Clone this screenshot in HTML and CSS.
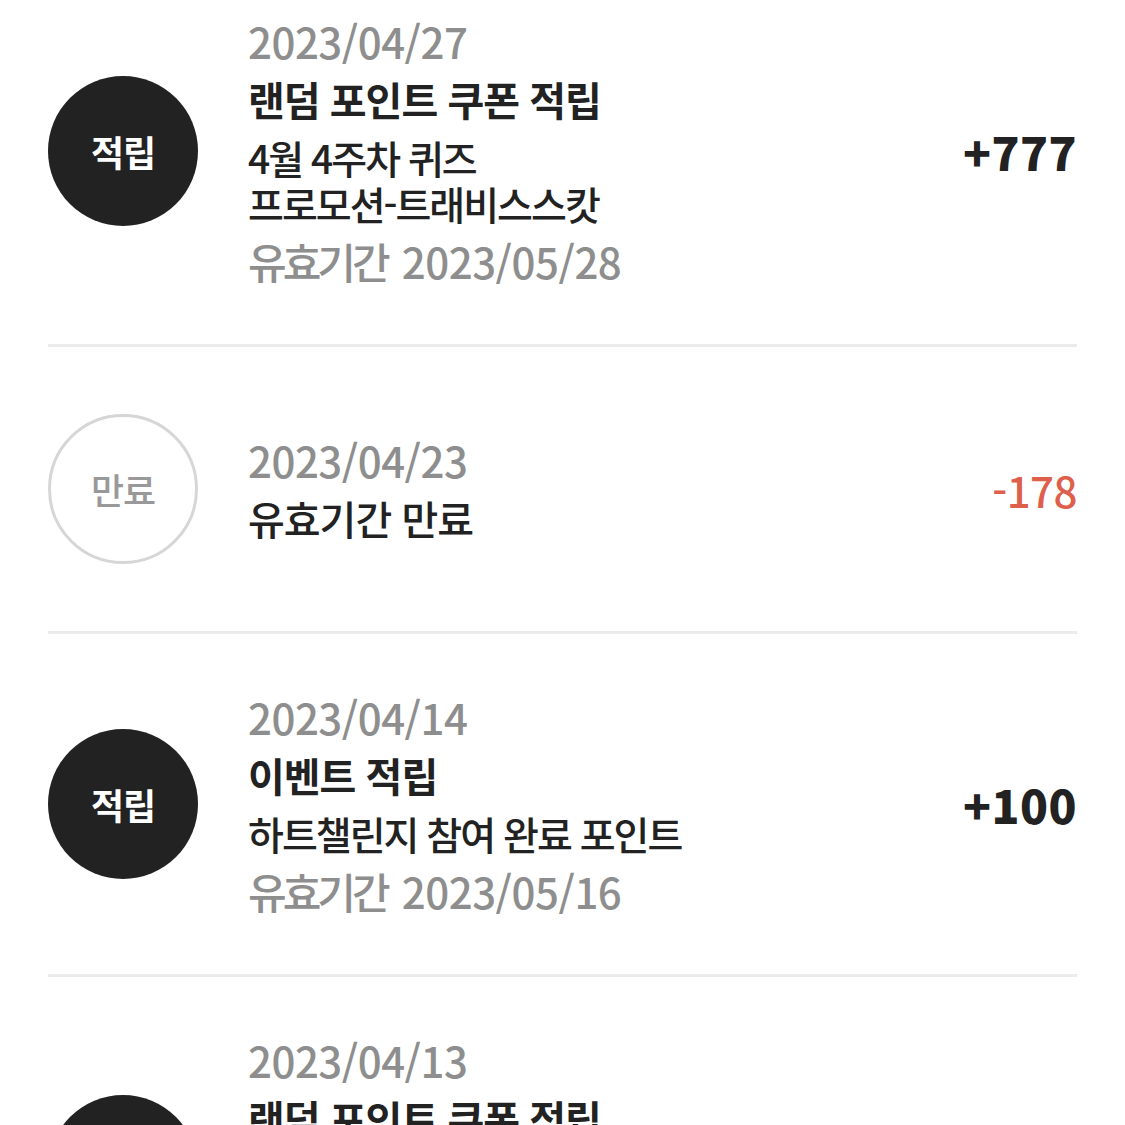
FILE: index.html
```html
<!DOCTYPE html>
<html lang="ko">
<head>
    <meta charset="UTF-8">
    <meta name="viewport" content="width=device-width, initial-scale=1.0">
    <title>포인트 내역</title>
    <link rel="stylesheet" href="styles.css">
</head>
<body>
    <!-- Point history list -->
    <ul class="history">
        <li class="history-item">
            <div class="badge badge-earn">적립</div>
            <div class="info">
                <p class="date">2023/04/27</p>
                <p class="title">랜덤 포인트 쿠폰 적립</p>
                <p class="desc">4월 4주차 퀴즈<br>프로모션-트래비스스캇</p>
                <p class="expire"><span class="label">유효기간</span> 2023/05/28</p>
            </div>
            <div class="amount">+777</div>
        </li>
        <li class="history-item">
            <div class="badge badge-expired">만료</div>
            <div class="info">
                <p class="date">2023/04/23</p>
                <p class="title title-plain">유효기간 만료</p>
            </div>
            <div class="amount amount-minus">-178</div>
        </li>
        <li class="history-item">
            <div class="badge badge-earn">적립</div>
            <div class="info">
                <p class="date">2023/04/14</p>
                <p class="title">이벤트 적립</p>
                <p class="desc">하트챌린지 참여 완료 포인트</p>
                <p class="expire"><span class="label">유효기간</span> 2023/05/16</p>
            </div>
            <div class="amount">+100</div>
        </li>
        <li class="history-item">
            <div class="badge badge-earn">적립</div>
            <div class="info">
                <p class="date">2023/04/13</p>
                <p class="title">랜덤 포인트 쿠폰 적립</p>
                <p class="desc">4월 2주차 퀴즈<br>프로모션-트래비스스캇</p>
                <p class="expire"><span class="label">유효기간</span> 2023/05/14</p>
            </div>
            <div class="amount">+500</div>
        </li>
    </ul>
</body>
</html>
```

FILE: styles.css
```css
:root {
    --text-dark: #222;
    --text-gray: #8e8e8e;
    --divider: #ebebeb;
    --minus: #de5f4b;
}

* {
    margin: 0;
    padding: 0;
    box-sizing: border-box;
}

body {
    font-family: 'Noto Sans CJK KR', 'Noto Sans', sans-serif;
    background: #fff;
    color: var(--text-dark);
    overflow: hidden;
}

/* List (scrolled a little) */
.history {
    list-style: none;
    margin-top: -42px;
    padding: 0 48px;
}

.history-item {
    display: flex;
    align-items: center;
    padding: 60px 0;
    border-bottom: 3px solid var(--divider);
}

/* Round badge */
.badge {
    flex: 0 0 150px;
    width: 150px;
    height: 150px;
    margin: 7px 50px 7px 0;
    border-radius: 50%;
    display: flex;
    align-items: center;
    justify-content: center;
    font-size: 36px;
    letter-spacing: -1px;
}

.badge-earn {
    background: #222;
    color: #fff;
    font-weight: 700;
}

.badge-expired {
    border: 3px solid #d6d6d6;
    color: #999;
    font-weight: 500;
}

/* Texts */
.info {
    flex: 1;
    font-size: 42px;
    line-height: 46px;
    letter-spacing: -0.5px;
}

.info p + p {
    margin-top: 12px;
}

.date,
.expire {
    color: var(--text-gray);
    font-weight: 500;
}

.expire .label {
    letter-spacing: -4px;
    margin-right: 4px;
}

.title {
    font-size: 40px;
    letter-spacing: -1px;
    font-weight: 700;
}

.title-plain {
    font-weight: 500;
}

.desc {
    font-size: 39px;
    letter-spacing: -2px;
    font-weight: 500;
}

.amount {
    font-size: 46px;
    font-weight: 800;
    letter-spacing: 0.5px;
}

.amount-minus {
    font-size: 42px;
    letter-spacing: -0.5px;
    color: var(--minus);
    font-weight: 500;
}
```
